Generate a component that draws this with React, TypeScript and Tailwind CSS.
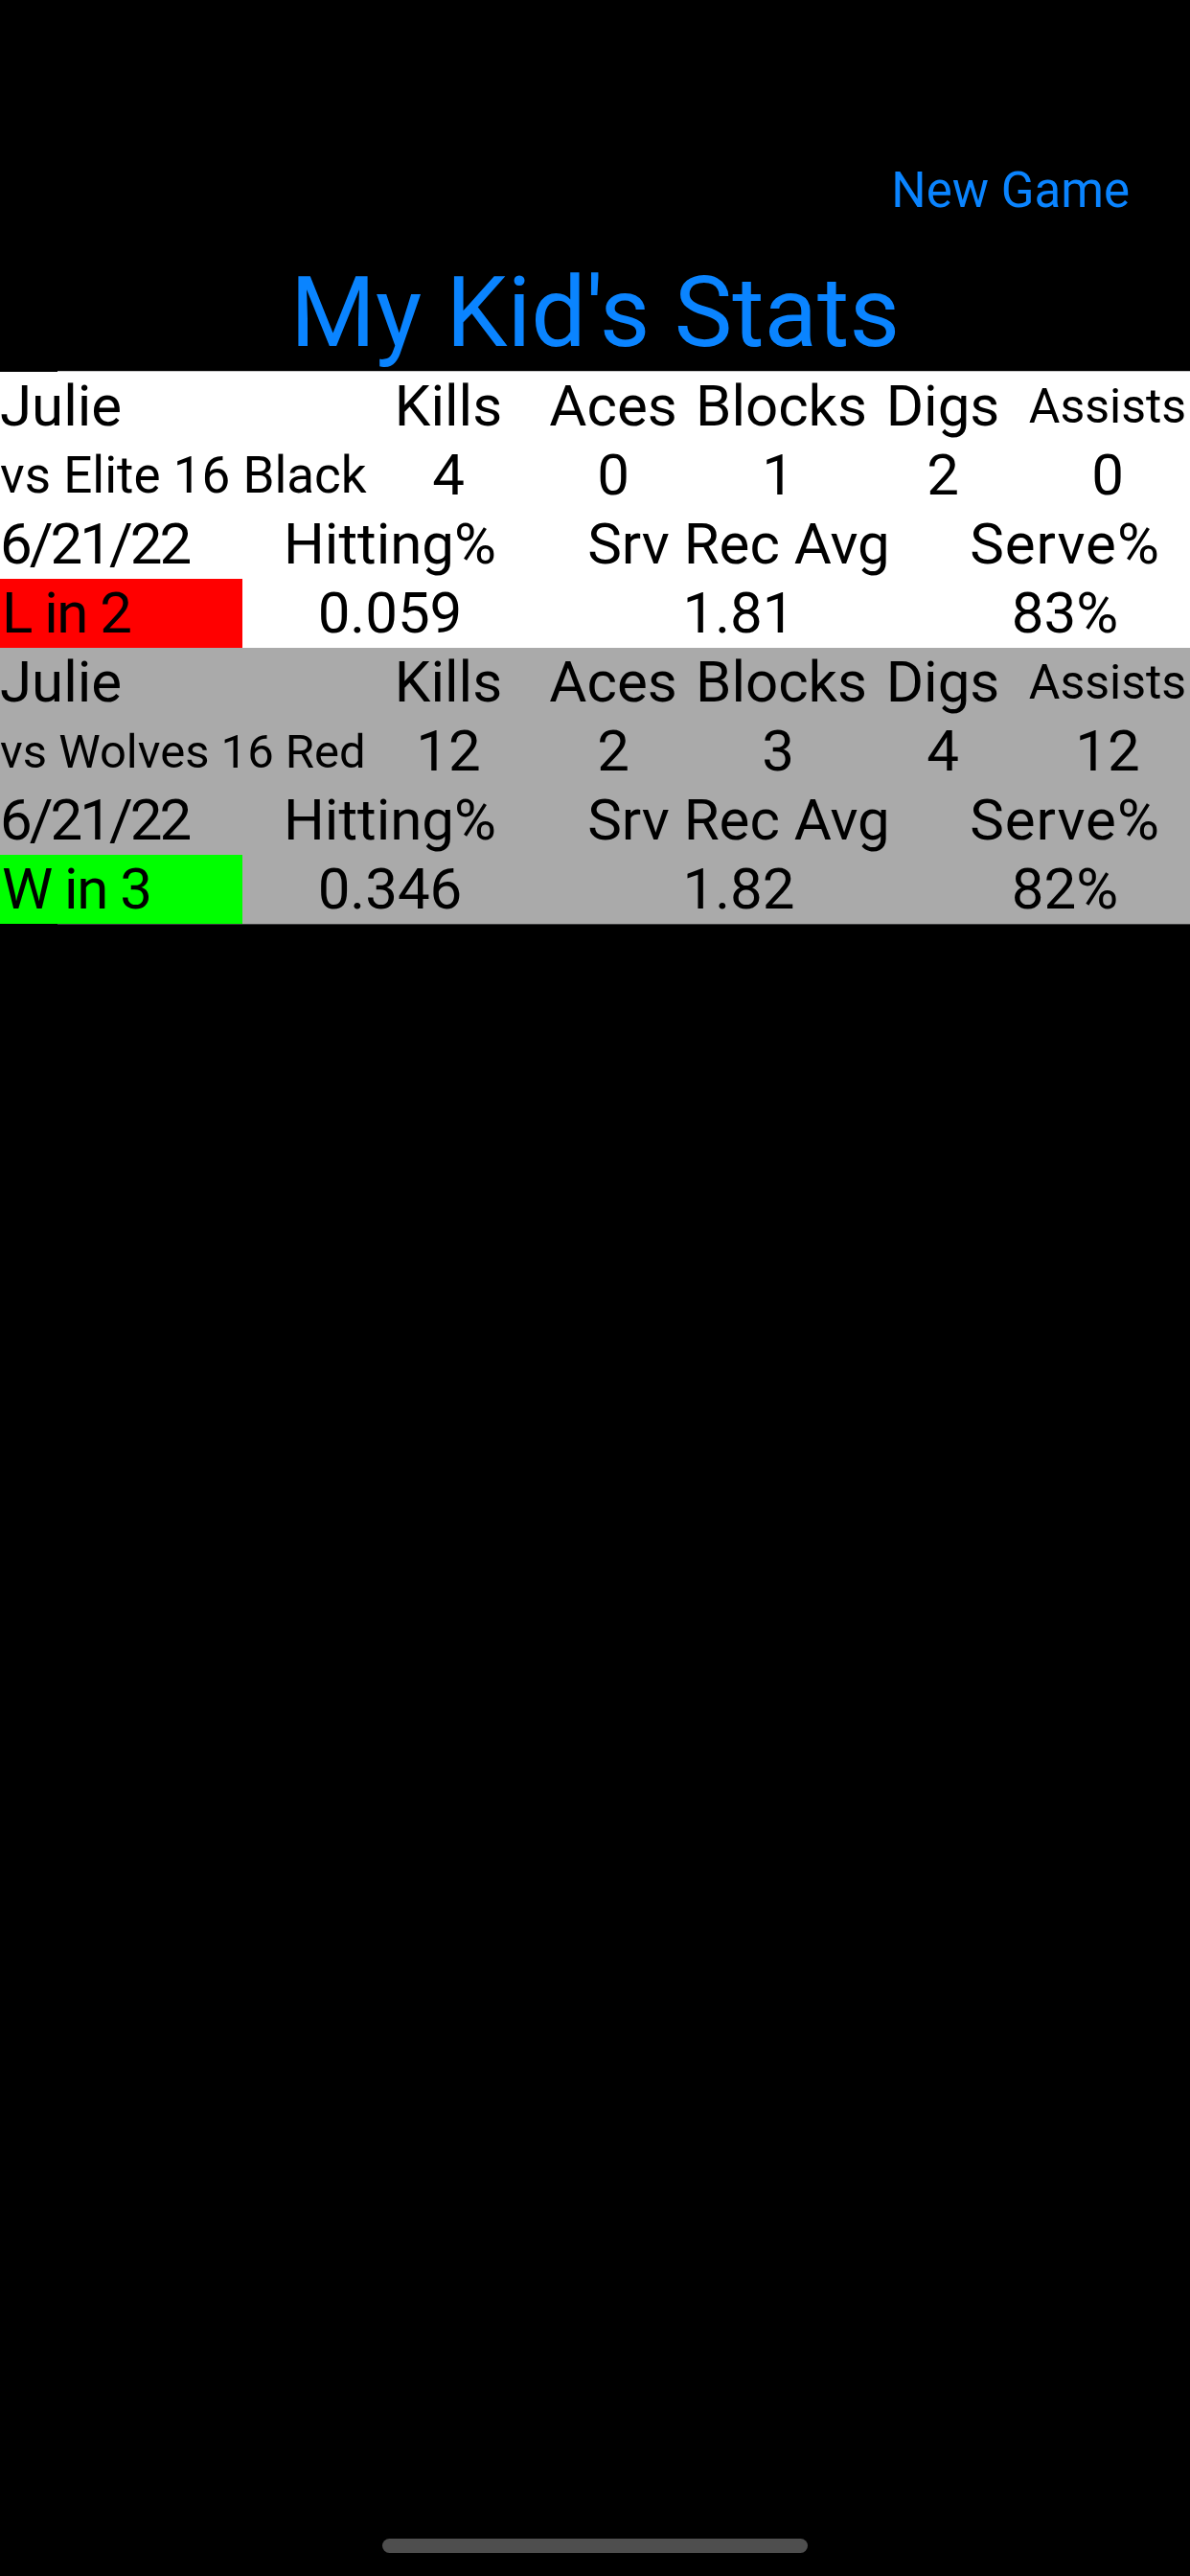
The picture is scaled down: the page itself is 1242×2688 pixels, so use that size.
import React from "react";

type Game = {
  name: string;
  opponent: string;
  opponentSize: string;
  date: string;
  result: string;
  resultBg: string;
  bg: string;
  kills: string;
  aces: string;
  blocks: string;
  digs: string;
  assists: string;
  hitting: string;
  srvRec: string;
  serve: string;
};

const games: Game[] = [
  {
    name: "Julie",
    opponent: "vs Elite 16 Black",
    opponentSize: "text-[53px]",
    date: "6/21/22",
    result: "L in 2",
    resultBg: "bg-[#ff0000]",
    bg: "bg-white",
    kills: "4",
    aces: "0",
    blocks: "1",
    digs: "2",
    assists: "0",
    hitting: "0.059",
    srvRec: "1.81",
    serve: "83%",
  },
  {
    name: "Julie",
    opponent: "vs Wolves 16 Red",
    opponentSize: "text-[49px]",
    date: "6/21/22",
    result: "W in 3",
    resultBg: "bg-[#00ff00]",
    bg: "bg-[#aaaaaa]",
    kills: "12",
    aces: "2",
    blocks: "3",
    digs: "4",
    assists: "12",
    hitting: "0.346",
    srvRec: "1.82",
    serve: "82%",
  },
];

function GameCard({ g }: { g: Game }) {
  return (
    <div className={`${g.bg} text-black`}>
      <div className="grid grid-cols-[382px_repeat(5,172px)] h-[72px] items-center text-[60px] leading-none">
        <div className="whitespace-nowrap">{g.name}</div>
        <div className="text-center">Kills</div>
        <div className="text-center">Aces</div>
        <div className="text-center">Blocks</div>
        <div className="text-center">Digs</div>
        <div className="text-center text-[50px] whitespace-nowrap">Assists</div>
      </div>
      <div className="grid grid-cols-[382px_repeat(5,172px)] h-[72px] items-center text-[60px] leading-none">
        <div className={`whitespace-nowrap ${g.opponentSize}`}>{g.opponent}</div>
        <div className="text-center">{g.kills}</div>
        <div className="text-center">{g.aces}</div>
        <div className="text-center">{g.blocks}</div>
        <div className="text-center">{g.digs}</div>
        <div className="text-center">{g.assists}</div>
      </div>
      <div className="grid grid-cols-[253px_308px_420px_261px] h-[72px] items-center text-[60px] leading-none">
        <div className="whitespace-nowrap tracking-[-3px]">{g.date}</div>
        <div className="text-center whitespace-nowrap">Hitting%</div>
        <div className="text-center whitespace-nowrap">Srv Rec Avg</div>
        <div className="text-center whitespace-nowrap tracking-[1px]">Serve%</div>
      </div>
      <div className="grid grid-cols-[253px_308px_420px_261px] h-[72px] items-center text-[60px] leading-none">
        <div
          className={`${g.resultBg} h-full flex items-center pl-[2px] whitespace-nowrap tracking-[-1.5px]`}
        >
          {g.result}
        </div>
        <div className="text-center">{g.hitting}</div>
        <div className="text-center">{g.srvRec}</div>
        <div className="text-center">{g.serve}</div>
      </div>
    </div>
  );
}

export default function App() {
  return (
    <div
      className="w-[1242px] min-h-[2688px] bg-black flex flex-col"
      style={{ fontFamily: "Roboto, 'Noto Sans', sans-serif" }}
    >
      <div className="pt-[168px] pr-[63px] text-right text-[51px] leading-[61px] text-[#0a84ff]">
        New Game
      </div>
      <h1 className="mt-[36px] text-center text-[102px] leading-[122px] font-normal text-[#0a84ff]">
        My Kid's Stats
      </h1>
      <div className="h-px bg-black">
        <div className="ml-[60px] h-px bg-[#c6c6c8]" />
      </div>
      {games.map((g, i) => (
        <GameCard key={i} g={g} />
      ))}
      <div className="h-px bg-black">
        <div className="ml-[60px] h-px bg-[#3a3a3c]" />
      </div>
      <div className="flex-1" />
      <div className="flex justify-center pb-[24px]">
        <div className="w-[444px] h-[15px] rounded-full bg-[#4e4e4e]" />
      </div>
    </div>
  );
}
